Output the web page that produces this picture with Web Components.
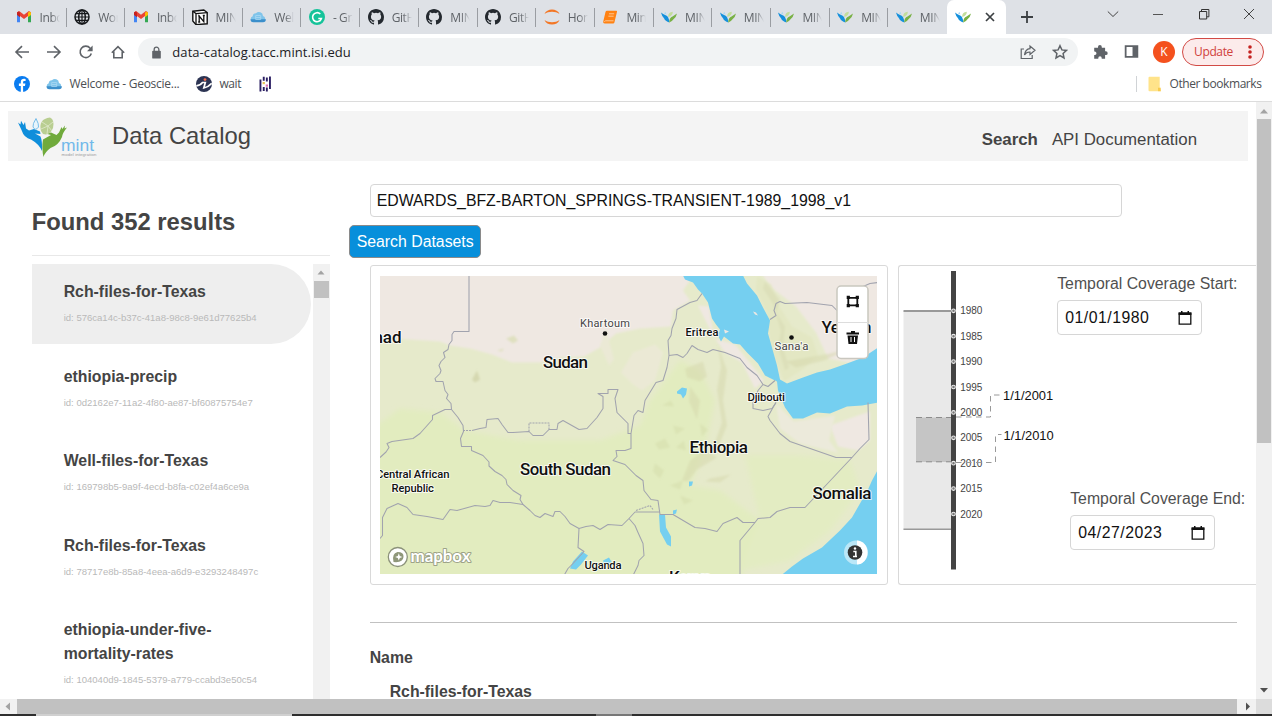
<!DOCTYPE html>
<html lang="en">
<head>
<meta charset="utf-8">
<title>MINT Data Catalog</title>
<style>
html,body{margin:0;padding:0;height:716px;overflow:hidden;background:#fff;font-family:"Liberation Sans",Arial,sans-serif;color:#444}
</style>
</head>
<body>
<browser-window></browser-window>
<script>
function define(name, html, init) {
  const t = document.createElement('template');
  t.innerHTML = html;
  customElements.define(name, class extends HTMLElement {
    connectedCallback() {
      if (this.shadowRoot) return;
      this.attachShadow({mode: 'open'}).append(t.content.cloneNode(true));
      if (init) init(this, this.shadowRoot);
    }
  });
}

/* Text spaced to take an exact width */
define('fit-label', `<style>:host{display:inline-block;white-space:nowrap;line-height:1.3}span{display:inline-block}</style><span><slot></slot></span>`, (el, root) => {
  const w = +el.getAttribute('width'), s = root.querySelector('span');
  el.style.width = w + 'px';
  s.style.letterSpacing = (w - s.getBoundingClientRect().width) / Math.max(1, el.textContent.length) + 'px';
});

const icons = {
  gmail: '<path d="M1 3.2v9.6h3V7L8 10l4-3v5.8h3V3.2L12.900 2 8 5.800 3.100 2z" fill="#ea4335"/><path d="M1 4v9.300h3V6.200z" fill="#4285f4"/><path d="M12 6.200v7.100h3V4z" fill="#34a853"/><path d="M1 3.500V6l3 2.200V3.800L2.800 2.500z" fill="#c5221f"/><path d="M15 3.500V6l-3 2.200V3.800l1.200-1.300z" fill="#fbbc04"/>',
  globe: '<g fill="none" stroke="#16181b" stroke-width="1.500"><circle cx="8" cy="8" r="7"/><ellipse cx="8" cy="8" rx="3.300" ry="7"/><path d="M8 1v14M1 8h14M2 4.600h12M2 11.400h12" stroke-width="1.200"/></g>',
  notion: '<path d="M.8 2.200 11.800 1l3.400 2.500v11.300L4 15.600.8 12z" fill="#fff" stroke="#111" stroke-width="1.400"/><path d="M.8 2.200 4 4.600l11.200-.9M4 4.600v11" fill="none" stroke="#111" stroke-width="1.300"/><path d="M7.200 13V7l4.600 5.600V6.600M6.200 6.900h1.600M6.200 13h2M10.800 6.500h2" fill="none" stroke="#111" stroke-width="1.300"/>',
  cloud: '<path d="M3.300 13a3 3 0 0 1-.6-5.800A3.200 3.200 0 0 1 6 4.300a4.100 4.100 0 0 1 7 2.600A3.200 3.200 0 0 1 13 13z" fill="#7fc4ea"/><path d="M3.300 13.200h9.700a3 3 0 0 0 2.900-3H.5a3 3 0 0 0 2.800 3z" fill="#3b8fcb"/><path d="M5.700 6.500h5v4h-5zM5.700 8.500h5" fill="none" stroke="#a9d8f2" stroke-width=".8"/>',
  grammarly: '<circle cx="8" cy="8" r="8" fill="#15c39a"/><path d="M11.300 5A4.500 4.500 0 1 0 12.400 9.500H9.300M12.400 9.500l-1.500 2.600" fill="none" stroke="#fff" stroke-width="1.600"/>',
  github: '<path d="M8 0C3.580 0 0 3.580 0 8c0 3.540 2.290 6.530 5.470 7.590.4.070.55-.17.55-.38v-1.490c-2.010.37-2.530-.49-2.690-.94-.09-.23-.48-.94-.82-1.130-.28-.15-.68-.52-.01-.53.63-.01 1.080.58 1.230.82.72 1.210 1.870.87 2.330.66.07-.52.28-.87.51-1.070-1.780-.2-3.640-.89-3.640-3.950 0-.87.31-1.590.82-2.150-.08-.2-.36-1.020.08-2.120 0 0 .67-.21 2.200.82a7.600 7.600 0 0 1 4 0c1.530-1.040 2.200-.82 2.200-.82.44 1.100.16 1.920.08 2.120.51.56.82 1.270.82 2.150 0 3.070-1.870 3.750-3.650 3.950.29.25.54.73.54 1.480v2.200c0 .21.15.46.55.38A8 8 0 0 0 16 8c0-4.420-3.580-8-8-8z" fill="#24292f"/>',
  jupyter: '<path d="M.5 5C2.500-1 13.500-1 15.500 5 11.500 2 4.500 2 .5 5zM.5 11c2 6 13 6 15 0-4 3-11 3-15 0z" fill="#f37726"/>',
  book: '<path d="M5 1.800h9.300q1 0 .7 1l-2.600 10.700q-.3 1.100-1.300 1.100H2.700q-1.900 0-1.500-1.800L3.500 3q.3-1.200 1.500-1.200z" fill="#ff8213"/><path d="M7 4.800h5.200M6.400 7.200h5.200M2.400 12.700q.3-.9 1.300-.9h7.800" fill="none" stroke="#ffcf9f" stroke-width=".9"/>',
  leaf: '<path d="M0 3.600q2 1.900 4.600 2.600 3.300 1 3.800 7.300Q4.200 12.300 3 9.300 1 7.700 0 3.600z" fill="#1590dc"/><path d="M16 4.500q-.7 3.600-3.500 5.800-1.700 2.700-4.300 3.200.2-4.700 3.300-5.900z" fill="#79b145"/><path d="M7.200 7.900q-.3-4.800 4.600-5.200.2 4-4.600 5.200z" fill="#c3dd9c"/><path d="M3 4.500l1.500-1.700.8 2.800z" fill="#a9d8f3"/>',
  facebook: '<circle cx="8" cy="8" r="8" fill="#0a7cf0"/><path d="M6.800 16V9.900H4.900V7.600h1.900V6c0-2.100 1.300-3.200 3.300-3.200l1.500.1v2h-1.200c-1.100 0-1.300.6-1.300 1.300v1.400h2.300l-.4 2.300H9.100V16z" fill="#fff"/>',
  wait: '<circle cx="8" cy="8" r="8" fill="#2c3453"/><path d="M.3 9.800q4-.3 6.200-3.300h2.800L7.800 12q4-.5 7.900-4.700" fill="none" stroke="#fff" stroke-width="1.700"/><circle cx="9" cy="3.600" r="1.400" fill="#f36b4b"/>',
  pandas: '<g fill="#2b1f63"><path d="M2.500 3.500h1.900v12H2.500zM5.800.8h1.900v4H5.800zM5.800 11h1.900v4H5.800zM8.900 1.500h1.900v4H8.900zM8.900 11.500h1.900v4H8.900zM12 .5h1.900v12.500H12z"/></g><path d="M5.600 6h2.300v2.200H5.600z" fill="#e8c258"/><path d="M8.700 8.500H11v2.200H8.700z" fill="#e070b4"/>',
  back: '<path d="M15 8H2.500M8 2.200 2 8l6 5.800" fill="none" stroke="#5f6368" stroke-width="1.600"/>',
  fwd: '<path d="M1 8h12.500M8 2.200 14 8l-6 5.800" fill="none" stroke="#5f6368" stroke-width="1.600"/>',
  reload: '<path d="M13.300 9.500a5.700 5.700 0 1 1-1.100-5.300l1.600 1.800" fill="none" stroke="#5f6368" stroke-width="1.600"/><path d="M14.600 1.500v5.700H9z" fill="#5f6368"/>',
  home: '<path d="M1.800 8.700 8 2.600l6.200 6.100M3.800 7.500v6.200h8.400V7.500" fill="none" stroke="#5f6368" stroke-width="1.600"/>',
  lock: '<rect x="3.400" y="6" width="9.200" height="8.500" rx="1" fill="#5f6368"/><path d="M5.500 6.500V4.800a2.500 2.500 0 0 1 5 0v1.700" fill="none" stroke="#5f6368" stroke-width="1.400"/>',
  share: '<path d="M4 5H1.200v9.500h11V11M4.500 11q.7-6 5.500-6.400V2l5 4.300-5 4.100V8q-3.600-.2-5.500 3z" fill="none" stroke="#5f6368" stroke-width="1.200"/>',
  star: '<path d="m8 1.700 1.900 4.200 4.600.5-3.400 3.100.9 4.500-4-2.300L4 14l.9-4.500L1.500 6.400l4.600-.5z" fill="none" stroke="#5f6368" stroke-width="1.500"/>',
  puzzle: '<path d="M6 3a1.900 1.900 0 0 1 3.800 0v.7h3.300v3.600h.7a1.900 1.900 0 0 1 0 3.800h-.7v3.700H9.700v-.9a1.700 1.700 0 0 0-3.400 0v.9H2.200v-3.700H3a1.900 1.900 0 0 0 0-3.700h-.8V3.700H6z" fill="#5f6368"/>',
  panel: '<path d="M.8 1.300h14.400v13.400H.8zM2.700 3.200v9.600h6.400V3.200z" fill="#5f6368" fill-rule="evenodd"/>',
  folder: '<path d="M2.500.8h10.200v11L14 15.200H2.500q-1 0-1-1V1.800q0-1 1-1z" fill="#ffe38a"/><path d="M11 15.200v-3.500h2.700v3.500z" fill="#f8cb4e"/>',
  close: '<path d="m4 4 8 8m0-8-8 8" stroke="#3c4043" stroke-width="1.700"/>',
  plus: '<path d="M8 2v12M2 8h12" stroke="#3c4043" stroke-width="1.800"/>',
  chevron: '<path d="m2.800 5.500 5.200 5 5.200-5" fill="none" stroke="#444" stroke-width="1"/>',
  min: '<path d="M3 8.500h10" stroke="#555"/>',
  max: '<path d="M3.500 5.500h7.200V13H3.500zM5.500 5.500v-2h7.400v7.300h-2" fill="none" stroke="#333" stroke-width="1"/>',
  x: '<path d="m3 3 10 10M13 3 3 13" stroke="#444"/>'
};
define('ui-icon', `<style>:host{display:block;width:var(--s,16px);height:var(--s,16px);flex:none}svg{display:block;width:100%;height:100%}</style><svg viewBox="0 0 16 16"></svg>`,
  (el, root) => { root.querySelector('svg').innerHTML = icons[el.getAttribute('name')] || ''; });

define('browser-tab', `<style>
:host{display:flex;align-items:center;box-sizing:border-box;width:58.700px;height:34px;padding-left:7.500px;gap:8px;flex:none;background:linear-gradient(#9a9da2,#9a9da2) right 8px/1px 19px no-repeat;font:12px "Open Sans",sans-serif;color:#5f6368}
div{width:20px;overflow:hidden;white-space:nowrap;letter-spacing:-.4px;-webkit-mask:linear-gradient(90deg,#000 55%,transparent)}
:host([active]){background:#fff;border-radius:7px 7px 0 0}
:host([active]) div{width:auto;-webkit-mask:none}
:host([last]){background:none}
</style><span></span><div><slot></slot></div>`, (el, root) => {
  const i = document.createElement('ui-icon');
  i.setAttribute('name', el.getAttribute('icon'));
  root.querySelector('span').replaceWith(i);
});

define('tab-strip', `<style>
:host{display:flex;height:34px;background:#dee1e6;padding-left:8px;align-items:center}
.plus{margin:0 auto 0 13px}
.win{display:flex;gap:29.500px;padding-right:15px;margin-top:-6px}
</style>
<browser-tab icon="gmail">Inbox</browser-tab><browser-tab icon="globe">Worl</browser-tab><browser-tab icon="gmail">Inbox</browser-tab><browser-tab icon="notion">MINT</browser-tab><browser-tab icon="cloud">Welc</browser-tab><browser-tab icon="grammarly">- Gra</browser-tab><browser-tab icon="github">GitH</browser-tab><browser-tab icon="github">MINT</browser-tab><browser-tab icon="github">GitH</browser-tab><browser-tab icon="jupyter">Hom</browser-tab><browser-tab icon="book">Mint</browser-tab><browser-tab icon="leaf">MINT</browser-tab><browser-tab icon="leaf">MINT</browser-tab><browser-tab icon="leaf">MINT</browser-tab><browser-tab icon="leaf">MINT</browser-tab><browser-tab icon="leaf" last>MINT</browser-tab><browser-tab icon="leaf" active style="gap:11px"><ui-icon name="close"></ui-icon></browser-tab>
<ui-icon class="plus" name="plus"></ui-icon>
<div class="win"><ui-icon name="chevron"></ui-icon><ui-icon name="min"></ui-icon><ui-icon name="max"></ui-icon><ui-icon name="x"></ui-icon></div>`);

define('nav-bar', `<style>
:host{display:flex;height:35px;align-items:center;padding:0 8px 0 14px;font-family:"Open Sans",sans-serif}
.nav{display:flex;gap:16px;width:125px;margin-left:-.5px}
.url{display:flex;align-items:center;box-sizing:border-box;width:941px;height:28px;border-radius:14px;background:#f1f3f4;padding:0 10px 0 10.500px;color:#202124;font-size:13px;margin-top:1px}
.url fit-label{margin:0 auto 0 8.500px}
.url .st{margin-left:16px}
.ext{display:flex;gap:16px;margin-left:14px;align-items:center}
.av{width:22px;height:22px;border-radius:50%;background:#f4511e;color:#fff;font-size:12px;line-height:22px;text-align:center;margin-left:-2px}
.up{display:flex;align-items:center;box-sizing:border-box;width:82px;height:28px;border:1.500px solid #d24a45;border-radius:14px;background:#fcebeb;color:#d0413b;font-size:12px;padding-left:11px;margin-left:7px;margin-top:1px}
.up svg{margin-left:12px}
</style>
<div class="nav"><ui-icon name="back"></ui-icon><ui-icon name="fwd"></ui-icon><ui-icon name="reload"></ui-icon><ui-icon name="home"></ui-icon></div>
<div class="url"><ui-icon name="lock" style="--s:15px"></ui-icon><fit-label width="178.500">data-catalog.tacc.mint.isi.edu</fit-label><ui-icon name="share"></ui-icon><ui-icon class="st" name="star"></ui-icon></div>
<div class="ext"><ui-icon name="puzzle"></ui-icon><ui-icon name="panel" style="--s:15px"></ui-icon><div class="av">K</div></div>
<div class="up"><fit-label width="39">Update</fit-label><svg width="20" height="16"><g fill="#c5221f"><circle cx="5" cy="3" r="1.800"/><circle cx="5" cy="8" r="1.800"/><circle cx="5" cy="13" r="1.800"/></g></svg></div>`);

define('bookmark-bar', `<style>
:host{display:flex;height:33px;box-sizing:border-box;align-items:center;padding:0 10.500px 3px 14px;border-bottom:1px solid #dcdcdc;font:12px "Open Sans",sans-serif;color:#4c4f53}
.i{display:flex;align-items:center;gap:8px}
.r{margin-left:auto;border-left:1px solid #d0d3d6;height:16px;padding-left:10px;gap:7px}
</style>
<ui-icon name="facebook"></ui-icon>
<div class="i" style="margin-left:15.500px"><ui-icon name="cloud"></ui-icon><fit-label width="110">Welcome - Geoscie...</fit-label></div>
<div class="i" style="margin-left:16px"><ui-icon name="wait"></ui-icon><fit-label width="21.500">wait</fit-label></div>
<ui-icon name="pandas" style="margin-left:16px"></ui-icon>
<div class="i r"><ui-icon name="folder"></ui-icon><fit-label width="92">Other bookmarks</fit-label></div>`);

define('site-header', `<style>
:host{display:flex;align-items:center;box-sizing:border-box;height:50px;width:1240px;margin:8.500px 8px 0;background:#f4f4f4;padding:0 51px 0 8px;color:#444}
svg{margin-top:2px}
.t{font-size:23.800px;margin:1px auto 0 14px}
.n{font-size:16.850px;margin-left:14px;padding-top:8px}
</style>
<svg width="82" height="44" viewBox="16 114 82 44">
<path d="M18 121.500 20.500 123.500 21 119.800 23.500 124 25 121 26 127.500 29 129.500 34 128 40 130.500 40.500 133 35 132.500 40.500 135.500Q42.500 140 42 150Q39 143 31 138.500Q24 137 21.500 129Z" fill="#0f8edb"/>
<path d="M67 126.500 64.500 127.500 65 124.500 62.300 128 61.500 126 59 131.500 56.500 134 51 131.500 46.500 132.800 51 134 43 138.500Q41.500 147 43.500 156Q45 151 50.500 147Q58.500 144.500 62 136Q62.500 132 67 126.500Z" fill="#70aa3c"/>
<path d="M36 117.500Q32.500 123 33 126Q35.500 130.500 38.500 126Q39 123 36 117.500Z" fill="#e8f5fc" stroke="#78bde9" stroke-width="1"/>
<path d="M41 130Q38 118 50 116.500Q55 119 53 127Q50 135 43 133Z" fill="#b9ce91"/><path d="M42 121l6 4 5-4M48 125l-1 8M41 128l7-3 4 5" fill="none" stroke="#dce7c6" stroke-width=".9"/>
<text x="61" y="149.500" font-family="Liberation Sans,sans-serif" font-size="17" fill="#72b9ea" textLength="33" lengthAdjust="spacingAndGlyphs">mint</text>
<text x="61.500" y="154.600" font-family="Liberation Sans,sans-serif" font-size="4.300" fill="#999" textLength="35">model integration</text>
</svg>
<div class="t">Data Catalog</div><div class="n"><b>Search</b></div><div class="n">API Documentation</div>`);

define('result-item', `<style>
:host{display:block;box-sizing:border-box;width:279px;min-height:79.500px;padding:16px 60px 11.500px 32px;margin-bottom:5.100px}
:host([selected]){background:#eee;border-radius:0 40px 40px 0}
.t{font-size:15.830px;font-weight:bold;line-height:24px;color:#444}
.d{font-size:9.540px;line-height:28px;color:#b9b9b9;white-space:nowrap}
</style><div class="t"><slot></slot></div><div class="d"></div>`, (el, root) => { root.querySelector('.d').textContent = 'id: ' + el.getAttribute('uid'); });

define('results-panel', `<style>
:host{display:block;width:298px;flex:none;padding-left:31.700px;margin-right:.3px;color:#444}
h2{margin:0;font-size:23.800px;line-height:30px;padding:46.500px 0 18px;border-bottom:1px solid #e8e8e8}
.l{display:flex;justify-content:space-between;margin-top:8px;height:435px;overflow:hidden}
.b{width:16.500px;background:#f1f1f1;display:flex;flex-direction:column;align-items:center}
.b i{width:14.500px;height:17px;background:#c1c1c1}
</style><h2>Found 352 results</h2>
<div class="l"><div>
<result-item selected uid="576ca14c-b37c-41a8-98c8-9e61d77625b4">Rch-files-for-Texas</result-item>
<result-item uid="0d2162e7-11a2-4f80-ae87-bf60875754e7">ethiopia-precip</result-item>
<result-item uid="169798b5-9a9f-4ecd-b8fa-c02ef4a6ce9a">Well-files-for-Texas</result-item>
<result-item uid="78717e8b-85a8-4eea-a6d9-e3293248497c">Rch-files-for-Texas</result-item>
<result-item uid="104040d9-1845-5379-a779-ccabd3e50c54">ethiopia-under-five-mortality-rates</result-item>
</div><div class="b"><svg width="16" height="17"><path d="M4.500 10.500h7L8 6.500z" fill="#a3a3a3"/></svg><i></i></div></div>`);

define('region-map', `<style>:host{display:block;box-sizing:border-box;width:518px;height:320px;border:1px solid #d9d9d9;border-radius:3px;padding:9.500px 0 0 9px}svg{display:block}
text{font-family:Roboto,sans-serif;font-weight:500;fill:#111;stroke:#fff;stroke-opacity:.75;stroke-width:2px;paint-order:stroke;stroke-linejoin:round}</style>
<svg width="497.500" height="298.500" viewBox="380 275.500 497.500 298.500">
<defs><filter id="soft"><feGaussianBlur stdDeviation="2.500"/></filter><filter id="mist"><feGaussianBlur stdDeviation="1"/></filter></defs>
<path d="M380 275h498v299H380z" fill="#e6eacb"/>
<g filter="url(#soft)">
<path d="M370 430L400 408 440 412 465 430 520 440 600 440 640 425 650 400 665 380 680 360 700 370 715 400 705 450 690 485 720 490 760 520 740 580 370 585z" fill="#e2ecbf"/>
<path d="M745 455L800 455 850 460 860 490 830 530 790 560 740 570 760 520z" fill="#e3ecc2"/>
</g>
<path filter="url(#mist)" d="M370 265H700L683 290 690 300 673 310 671 326 640 328 616 333 600 347 584 356 560 357 540 362 512 362 492 354 470 348 450 345 440 341 410 339 370 336z" fill="#efe8e2"/>
<path filter="url(#mist)" d="M698 305L709 306 714 338 735 344 764 380 755 388 742 362 725 352 713 335zM760 270h124v87l-36 5-20-4-12-26-20-26-26-20zM858 415L870 411 870 440 858 450 838 446 830 425z" fill="#efe8e2"/>
<g filter="url(#mist)">
<path d="M776 403L794 421 835 415 829 440 838 452 800 443 780 428z" fill="#eceadb"/>
<path d="M621 372l12-20 22-8 8 8-8 28-13 10-9-6zM606 329l8 30-5 6-9-20z" fill="#ebe9d5"/>
<path d="M506 338l8-3 4 5-5 3zM497 350l7-2-2 3z" fill="#dfe0c0"/><path d="M472 379l5-9 3 9-5 3z" fill="#d5d8b0"/>
<path d="M757 276l14 8 9 23 12 19 20 11 6 18-14 13-20 13-9-23-6-25-2-20-11-24z" fill="#e3e7c3"/>
<path d="M765 281l15 18-4 13 9 14-2 21 6 20-4 3-7-24 3-15-8-28-10-15z" fill="#d7d9b2" opacity=".5"/>
<path d="M718 345l9 25-4 30 4 25-8 20-4-3 7-20-5-33 4-23zM685 368l18-7 4 15-7 5-13-4zM710 478l21-4-11 8-15-1zM690 386l10 14-3 19-8-18zM690 460l15-11 12 8-20 12-9 12-6-1zM786 361l44-8 20-5-26 12-28 7z" fill="#d5d8ac" opacity=".5"/>
<path d="M662 405l9-5 3 6zM673 425l12 3-9 6zM655 443l10-5 5 9-11 2zM676 447l8-7 2 10zM655 463l9 7-4 8-7-7zM700 423l8 6-6 7zM670 485l13-5-3 9zM680 495l13 5-9 4z" fill="#d3dca9" opacity=".5"/>
</g>
<g fill="#75cff0">
<path d="M683 275L685 279 693 282 698 289 702 293 708 302 712 318 716 324 720 329 718 335 721 341 724 336 733 343 740 344 747 352 758 363 765 375 771 378 777 381 778 390 785 407 793 418 803 418 817 412 830 413 847 406 862 405 878 402V347L863 357 847 363 830 369 817 372 803 377 787 383 780 379 777 365 772 347 768 333 770 320 763 307 757 295 747 283 743 275z"/>
<path d="M878 469L872 480 868 489 860 503 852 517 840 530 822 547 803 558 792 566 781 575H878z"/>
<path d="M677 391l5-4 5 1-1 6-3 4-2-4-4-1zM659 514h6l1 13 5 9v10l-4-2-7-13zM689 481h4l-1 4-3 1zM673 510l4-1-1 4-3 1zM582 551l6 4-7 9-5 5-6-1 3-7zM603 560l6-3 3 5-8 1z"/>
</g>
<path d="M753 311l3 1 2 3-3-1zM724 329l5 2-4 2z" fill="#efe8e2"/>
<g fill="none" stroke="#a1a3ae" stroke-width="1.050" stroke-linejoin="round">
<path d="M469 275V331L463 331 454 331 452 334 452 340 449 344 448 349 443.500 352 445 357 441 361 439 365 441 370 440 373 435 378 436 381 443 381 445 390 448 394 446.500 398 451 403 451.500 409 445 409 432.500 415V419L420 433 413 438 392 441 387 443 389 447 386 451.500 380 457"/>
<path d="M451.500 409L458 417 463 425 463.500 431 460.500 438 461.500 446H471.500V450L483 455 489 461.500V465.500L495 471 502 475 506 479 507 484 513 490 521 495 520 499 523 504 530 510 535 515 540 517 545 513 553 516 555 511 560 511 565 516 570 523 579 528 586 526 593 525 600 529 608 524 622 525 629 518 635 511.500H660"/>
<path d="M380 538L382.500 535V517L387 508 398 503 407 507 413 514 427 516 443 519 450 509 457 510 475 505 485 506 490 505 493 500 500 502 510 502 523 504M579 528L578 547 584 551 573 563 568 568 564 575M629 518L635 525 638 532 643 543 644 555 639 560 638 565 633 575"/>
<path d="M472 430L480 428 486 427 487 419 498 418 502 424 508 432 513 432 529 431 533 435H543L549 429 557 429 558 423 563 420 579 429 587 428 597 417 603 408 603 396 598 393H608V389H618L615 398 617 412 628 423 628 433H631"/>
<path d="M463 430H472M529 431V422.500H549V430M636 510L650 505 653 509" stroke-dasharray="2 1"/>
<path d="M702 293L697 300 690 302 677 309 676 318 672 328 671 335 668 340 669 355 667 367 663 380 656 382 645 400 643 412 638 410 634 415 631 433V448L625 450H616L617 456 613 460 625 464 636 475 643 480 644 490 651 499 658 500 660 514H673L695 527 705 528 717 531 723 523 737 517 743 522H755L758 518 770 517 777 511 790 507H805L852 457H836L790 441 780 433 770 420 768 416 773 407 776 402M755 522L740 540V575M852 457L860 448 869 439 868 402"/>
<path d="M669 355L677 354 683 357 687 353 692 345 698 349 707 352 713 349 725 352 740 358 747 367 757 375 763 384 768 386 775 380M763 384L758 390 753 402V408L763 410 772 408 776 402M770 319L776 315 774 310 776 303 780 301 785 303 807 302 832 305 837 310M863 286L870 283 878 282"/>
</g>
<g>
<text x="362.500" y="342.500" textLength="39" font-size="17">Chad</text>
<text x="543" y="367.500" textLength="45" font-size="17">Sudan</text>
<text x="580" y="326.500" textLength="50" font-size="11" style="font-weight:400;fill:#444">Khartoum</text><circle cx="605" cy="333" r="2.300" fill="#111"/>
<text x="685.500" y="335" textLength="33" font-size="11">Eritrea</text>
<text x="747.500" y="400" textLength="37.500" font-size="11.500">Djibouti</text>
<text x="774.500" y="349.500" textLength="34" font-size="11.500" style="font-weight:400;fill:#444">Sana'a</text><circle cx="791.500" cy="337" r="2.300" fill="#111"/>
<text x="821.500" y="332.500" textLength="50" font-size="17">Yemen</text>
<text x="689.500" y="452.500" textLength="58.500" font-size="17">Ethiopia</text>
<text x="520" y="474.500" textLength="91" font-size="17">South Sudan</text>
<text x="812.500" y="498" textLength="59" font-size="17">Somalia</text>
<text x="376" y="477.500" textLength="73.500" font-size="11.300">Central African</text><text x="391.500" y="491" textLength="42.500" font-size="11.300">Republic</text>
<text x="584.500" y="568.500" textLength="37" font-size="11.300">Uganda</text>
<text x="669" y="582.500" textLength="43" font-size="17">Kenya</text>
</g>
<g><circle cx="397.800" cy="556.500" r="9.500" fill="#fff" stroke="#8c927a" stroke-width="1.300"/><path d="M393.500 561.500Q391.500 553 397.500 551.500 404 551.500 403.500 556.500 403 562.500 393.500 561.500z" fill="#8f9779"/><path d="m398.800 552.800 1 2.700 2.600 1-2.600 1-1 2.600-1-2.600-2.700-1 2.700-1z" fill="#fff"/>
<text x="410.500" y="561" font-size="17" textLength="60" style="font-family:Lato;font-weight:700;fill:#fff;stroke:#9da388;stroke-opacity:1">mapbox</text></g>
<g><rect x="837" y="285.500" width="31" height="72.500" rx="4" fill="#fff" stroke="#c9c7bf" stroke-width="1.500"/><path d="M837 322h31" stroke="#ddd"/>
<path d="M848.300 297.300h9v7.500h-9z" fill="none" stroke="#111" stroke-width="1.800"/><path d="M846.700 295.300h3.200v3.200h-3.200zM855.700 295.300h3.200v3.200h-3.200zM846.700 303.600h3.200v3.200h-3.200zM855.700 303.600h3.200v3.200h-3.200z" fill="#111"/>
<path d="M846.500 332h4.500v-1.500h4v1.500h4v2h-12.500zM847.500 335h10.500l-1 8.500h-8.500z" fill="#111"/><path d="M851 336.500v5M854.500 336.500v5" stroke="#fff"/></g>
<g><rect x="844" y="540" width="24" height="24" rx="12" fill="#fff" opacity=".5"/><path d="M857 540a10.500 12 0 0 1 0 24z" fill="#fff"/><circle cx="855" cy="552" r="7.300" fill="#333"/><path d="M853.300 551h2.500v5h1M853 556h4" stroke="#fff" stroke-width="1.600" fill="none"/><circle cx="855" cy="548" r="1.200" fill="#fff"/></g>
</svg>`);

define('date-field', `<style>:host{display:block;color:#505050}label{display:block;font-size:15.830px;line-height:20px;white-space:nowrap}
div{display:flex;align-items:center;justify-content:space-between;box-sizing:border-box;width:145px;height:35px;border:1px solid #d6d6d6;border-radius:4px;margin-top:6.500px;padding:0 8.500px 0 7px;color:#111;font-size:15.830px;letter-spacing:.5px}
</style><label><slot></slot></label><div><span></span><svg width="16" height="16" viewBox="0 0 16 16"><path d="M2.200 3.200h11.600v11H2.200z" fill="none" stroke="#111" stroke-width="1.300"/><path d="M1.600 2.500h12.800V5H1.600zM4 1h1.500v2H4zM10.500 1H12v2h-1.500z" fill="#111"/></svg></div>`, (el, root) => { root.querySelector('span').textContent = el.getAttribute('value'); });

define('time-line', `<style>:host{display:block}svg{display:block}text{font-family:"Liberation Sans",sans-serif;font-size:10px;fill:#444}.b{font-size:12.900px;fill:#111}</style>
<svg width="158.500" height="305" viewBox="899 266 158.500 305">
<path d="M903.500 311h48v219h-48z" fill="#e9e9e9"/><path d="M903.500 311h48" stroke="#999" stroke-width="2"/><path d="M903.500 529.300h48" stroke="#999" stroke-width="1.600"/>
<path d="M916 417.500h35.500V462H916z" fill="#c5c5c5"/>
<g stroke="#8c8c8c" stroke-dasharray="6 4" fill="none"><path d="M916 417.500h36M916 461.800h36"/></g>
<path d="M951 271h5v298.500h-5z" fill="#444"/>
<g id="ticks"></g>
<path d="M956 417h34.500v-22h11M956 462.500h39.500v-28h6" fill="none" stroke="#999" stroke-dasharray="5.500 4.500"/>
<text class="b" x="1003" y="400">1/1/2001</text><text class="b" x="1003.500" y="440">1/1/2010</text>
</svg>`, (el, root) => {
  root.querySelector('#ticks').innerHTML = [1980,1985,1990,1995,2000,2005,2010,2015,2020].map((y, i) => {
    const c = 310.8 + i * 25.4;
    return `<circle cx="953.500" cy="${c}" r="1.800" fill="#777" stroke="#eee" stroke-width="1.100"/><text x="960.200" y="${c + 3.500}">${y}</text>`;
  }).join('');
});

define('coverage-card', `<style>:host{display:flex;box-sizing:border-box;width:400px;height:320px;flex:none;border:1px solid #d9d9d9;border-right:0;border-radius:3px 0 0 3px}
.d{padding-top:7.500px;height:276.500px;display:flex;flex-direction:column;justify-content:space-between}.e{margin-left:13px}</style>
<time-line></time-line><div class="d"><date-field value="01/01/1980">Temporal Coverage Start:</date-field><date-field class="e" value="04/27/2023">Temporal Coverage End:</date-field></div>`);

define('search-panel', `<style>
:host{display:block;padding:23.500px 0 0 39.700px;flex:1;min-width:0;overflow:hidden;color:#444}
.q{box-sizing:border-box;width:752px;height:33px;border:1px solid #d6d6d6;border-radius:4px;padding-left:6px;font-size:15.850px;line-height:31px;color:#111}
.go{box-sizing:border-box;width:132px;height:33px;margin:7.500px 0 7.500px -20.500px;border:1px solid #8a8a8a;border-radius:5px;background:#078fdb;color:#fff;font-size:15.830px;line-height:31px;text-align:center}
.c{display:flex;gap:10px;width:0}
region-map{flex:none}
hr{border:0;border-top:1px solid #c1c1c1;margin:37px 19px 0 0}
dl{margin:24.500px 0 0;font-weight:bold;font-size:15.830px;line-height:20px}dd{margin:14px 0 0 20px}
</style>
<div class="q">EDWARDS_BFZ-BARTON_SPRINGS-TRANSIENT-1989_1998_v1</div><div class="go">Search Datasets</div>
<div class="c"><region-map></region-map><coverage-card></coverage-card></div><hr><dl><dt>Name</dt><dd>Rch-files-for-Texas</dd></dl>`);

define('browser-window', `<style>
:host{display:flex;flex-direction:column;width:1272px;height:716px;overflow:hidden}
.view{display:flex;height:597px;flex:none}
.page{width:1256px;height:597px;overflow:hidden;flex:none}
.cols{display:flex}
.v{width:16px;background:#f1f1f1;display:flex;flex-direction:column;align-items:center}
.v i{width:14px;height:324px;background:#c1c1c1}.v .dn{margin-top:auto}
.h{display:flex;height:15px;background:#f1f1f1;flex:none}
.h i{width:1220px;background:#c1c1c1}.h b{width:16px;background:#dcdcdc}
.f{height:2px;flex:none;background:linear-gradient(90deg,#2e2e2e 36px,#d0d0d0 36px 292px,#2e2e2e 292px 596px,#777 596px 632px,#2e2e2e 632px)}
</style>
<tab-strip></tab-strip><nav-bar></nav-bar><bookmark-bar></bookmark-bar>
<div class="view"><div class="page"><site-header></site-header><div class="cols"><results-panel></results-panel><search-panel></search-panel></div></div>
<div class="v"><svg width="16" height="17"><path d="M4 11.500h8L8 7z" fill="#a3a3a3"/></svg><i></i><svg class="dn" width="16" height="17"><path d="M4 6h8l-4 4.500z" fill="#505050"/></svg></div></div>
<div class="h"><svg width="17" height="15"><path d="M10 3.500v8L5.500 7.500z" fill="#a3a3a3"/></svg><i></i><svg width="19" height="15"><path d="M9 3.500v8l4-4z" fill="#505050"/></svg><b></b></div>
<div class="f"></div>`);
</script>
</body>
</html>
